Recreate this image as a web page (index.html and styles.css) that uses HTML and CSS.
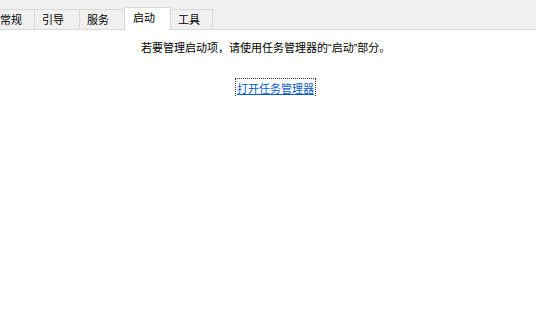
FILE: index.html
```html
<!DOCTYPE html>
<html lang="zh-CN">
<head>
<meta charset="UTF-8">
<title>系统配置</title>
<link rel="stylesheet" href="styles.css">
</head>
<body>

<div class="tabbar">
  <div class="tabs">
    <div class="tab first">常规</div>
    <div class="tab">引导</div>
    <div class="tab">服务</div>
    <div class="tab active">启动</div>
    <div class="tab last">工具</div>
  </div>
</div>

<div class="panel">
  <div class="note">若要管理启动项，请使用任务管理器的<span class="q">“</span>启动<span class="q">”</span>部分。</div>
  <div class="linkrow">
    <a class="link" href="#">打开任务管理器</a>
  </div>
</div>

</body>
</html>
```

FILE: styles.css
```css
body{
  margin:0;
  background:#fff;
  font-family:"Noto Sans CJK SC","Microsoft YaHei",sans-serif;
  font-size:11px;
  color:#000;
}

.tabbar{
  height:29px;
  background:#f0f0f0;
  border-bottom:1px solid #d9d9d9;
}

.tabs{
  display:flex;
  align-items:flex-end;
  height:29px;
  margin-left:-7px;
}

.tab{
  box-sizing:border-box;
  width:45px;
  height:20px;
  line-height:19px;
  padding-left:7px;
  border:1px solid #d9d9d9;
  border-bottom:none;
  border-left:none;
  background:#f0f0f0;
  color:#000;
}

.tab.first{
  width:42px;
}

.tab.last{
  width:42px;
}

.tab.active{
  width:47px;
  height:23px;
  line-height:18px;
  margin-bottom:-1px;
  margin-left:-1px;
  padding-left:8px;
  background:#fff;
  border-left:1px solid #d9d9d9;
}

.panel{
  padding-top:10px;
}

.note{
  padding-left:141px;
  line-height:15px;
}

.q{
  font-family:"Liberation Sans",sans-serif;
}

.linkrow{
  padding-top:24px;
  padding-left:237px;
}

.link{
  color:#0a5bc4;
  text-decoration:underline;
  line-height:14px;
  outline:1px dotted #333;
  outline-offset:1px;
}
```
